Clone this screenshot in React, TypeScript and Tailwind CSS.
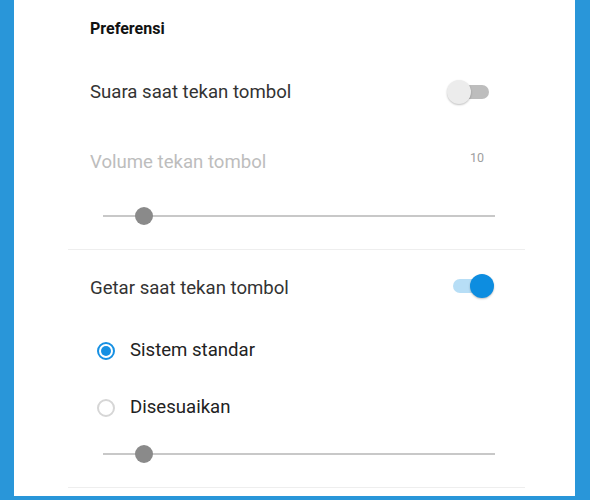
import React from 'react';

function Toggle({ on }: { on: boolean }) {
  return (
    <div className="relative w-[47px] h-[26px] mr-[31px]">
      <div
        className={`absolute left-[6px] top-[6px] w-[36px] h-[14px] rounded-full ${
          on ? 'bg-[#b7def6]' : 'bg-[#bdbdbd]'
        }`}
      />
      <div
        className={`absolute top-[1px] w-[24px] h-[24px] rounded-full shadow-[0_1px_2px_rgba(0,0,0,0.25)] ${
          on ? 'right-0 bg-[#0d8de0]' : 'left-0 bg-[#ececec]'
        }`}
      />
    </div>
  );
}

function Slider({ height }: { height: string }) {
  return (
    <div className={`flex items-center pl-[35px] pr-[30px] ${height}`}>
      <div className="relative w-full h-[2px] bg-[#c8c8c8]">
        <div className="absolute left-[32px] top-1/2 -translate-y-1/2 w-[18px] h-[18px] rounded-full bg-[#8a8a8a]" />
      </div>
    </div>
  );
}

function Radio({ checked, label, height }: { checked: boolean; label: string; height: string }) {
  return (
    <div className={`flex items-center pl-[29px] ${height}`}>
      <div
        className={`w-[18px] h-[18px] rounded-full flex items-center justify-center border-2 ${
          checked ? 'border-[#1690e3]' : 'border-[#d6d6d6]'
        }`}
      >
        {checked && <div className="w-[10px] h-[10px] rounded-full bg-[#1690e3]" />}
      </div>
      <span className="ml-[15px] text-[18.6px] text-[#222222]">{label}</span>
    </div>
  );
}

export default function App() {
  return (
    <div className="w-[590px] h-[500px] bg-[#2996d9] overflow-hidden" style={{ fontFamily: 'Roboto, "Noto Sans", sans-serif' }}>
      <div className="ml-[14px] w-[561px] h-[496px] bg-white pl-[54px] pr-[50px]">
        <div className="h-[58px] flex items-center px-[22px]">
          <h3 className="text-[16px] font-bold text-[#111111]">Preferensi</h3>
        </div>

        <div className="h-[68px] flex items-center justify-between pl-[22px]">
          <span className="text-[18.6px] text-[#333333] pt-[2px]">Suara saat tekan tombol</span>
          <Toggle on={false} />
        </div>

        <div className="h-[70px] flex items-center justify-between pl-[22px]">
          <span className="text-[18.6px] text-[#bdbdbd] pt-[3px]">Volume tekan tombol</span>
          <span className="text-[12.5px] text-[#9e9e9e] mr-[41px] mb-[5px]">10</span>
        </div>

        <Slider height="h-[40px]" />

        <div className="mt-[13px] border-t border-[#eeeeee]" />

        <div className="h-[72px] flex items-center justify-between pl-[22px]">
          <span className="text-[18.6px] text-[#333333] pt-[5px]">Getar saat tekan tombol</span>
          <Toggle on={true} />
        </div>

        <Radio checked={true} label="Sistem standar" height="h-[58px]" />
        <Radio checked={false} label="Disesuaikan" height="h-[56px]" />

        <Slider height="h-[36px]" />

        <div className="mt-[15px] border-t border-[#eeeeee]" />
      </div>
    </div>
  );
}
